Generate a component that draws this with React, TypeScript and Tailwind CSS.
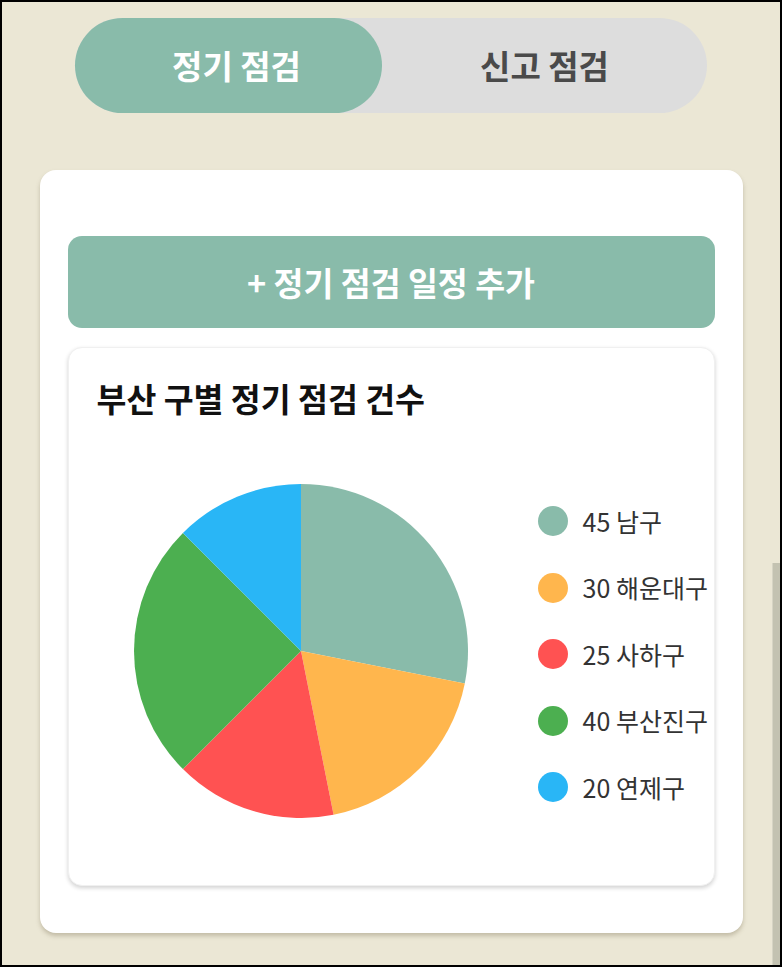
import React from "react";

const SLICES = [
  { value: 45, name: "남구", color: "#89bbaa" },
  { value: 30, name: "해운대구", color: "#ffb64d" },
  { value: 25, name: "사하구", color: "#ff5252" },
  { value: 40, name: "부산진구", color: "#4caf50" },
  { value: 20, name: "연제구", color: "#29b6f6" },
];

function Pie({ size }: { size: number }) {
  const r = size / 2;
  const total = SLICES.reduce((s, d) => s + d.value, 0);
  let acc = 0;
  const point = (frac: number) => {
    const a = frac * Math.PI * 2 - Math.PI / 2;
    return [r + r * Math.cos(a), r + r * Math.sin(a)];
  };
  return (
    <svg width={size} height={size} viewBox={`0 0 ${size} ${size}`}>
      {SLICES.map((d) => {
        const start = acc / total;
        acc += d.value;
        const end = acc / total;
        const [x1, y1] = point(start);
        const [x2, y2] = point(end);
        const large = end - start > 0.5 ? 1 : 0;
        return (
          <path
            key={d.name}
            d={`M${r},${r} L${x1},${y1} A${r},${r} 0 ${large} 1 ${x2},${y2} Z`}
            fill={d.color}
          />
        );
      })}
    </svg>
  );
}

export default function App() {
  return (
    <div
      className="relative h-[967px] w-[782px] overflow-hidden border-2 border-black bg-[#ebe7d5]"
      style={{ fontFamily: '"Noto Sans CJK KR", "Noto Sans", sans-serif' }}
    >
      {/* tabs */}
      <div className="mx-auto mt-[16px] flex h-[95px] w-[632px] rounded-full bg-[#dddddd]">
        <button className="flex w-[307px] items-center justify-center rounded-full bg-[#89bbaa] pl-[16px]">
          <span className="text-[33px] font-bold leading-none text-white">정기 점검</span>
        </button>
        <button className="flex flex-1 items-center justify-center">
          <span className="text-[33px] font-bold leading-none text-[#4a4a4a]">신고 점검</span>
        </button>
      </div>

      {/* main card */}
      <div className="mx-auto mt-[57px] w-[703px] rounded-[16px] bg-white px-[28px] pb-[47px] pt-[66px] shadow-[0_3px_4px_rgba(120,110,80,0.35)]">
        <button className="flex h-[92px] w-full items-center justify-center rounded-[14px] bg-[#89bbaa] text-[32.5px] font-bold text-white">
          + 정기 점검 일정 추가
        </button>

        <div className="mt-[19px] h-[539px] rounded-[14px] border border-[#f0f0f0] bg-white shadow-[0_2px_4px_rgba(0,0,0,0.18)]">
          <h2 className="pl-[28px] pt-[29px] text-[32.5px] font-bold leading-[42px] text-[#111]">
            부산 구별 정기 점검 건수
          </h2>
          <div className="mt-[63px] flex items-center pl-[65px]">
            <Pie size={334} />
            <ul className="ml-[70px] flex flex-col pt-[6px]">
              {SLICES.map((d) => (
                <li key={d.name} className="flex h-[66.5px] items-center gap-[15px]">
                  <span className="h-[30px] w-[30px] rounded-full" style={{ background: d.color }} />
                  <span className="text-[25px] text-[#333]">
                    {d.value} {d.name}
                  </span>
                </li>
              ))}
            </ul>
          </div>
        </div>
      </div>

      {/* scrollbar */}
      <div className="absolute bottom-0 right-0 top-[561px] w-[8px] border-l border-[#d6d4c4] bg-[#c3c2b1]" />
    </div>
  );
}
